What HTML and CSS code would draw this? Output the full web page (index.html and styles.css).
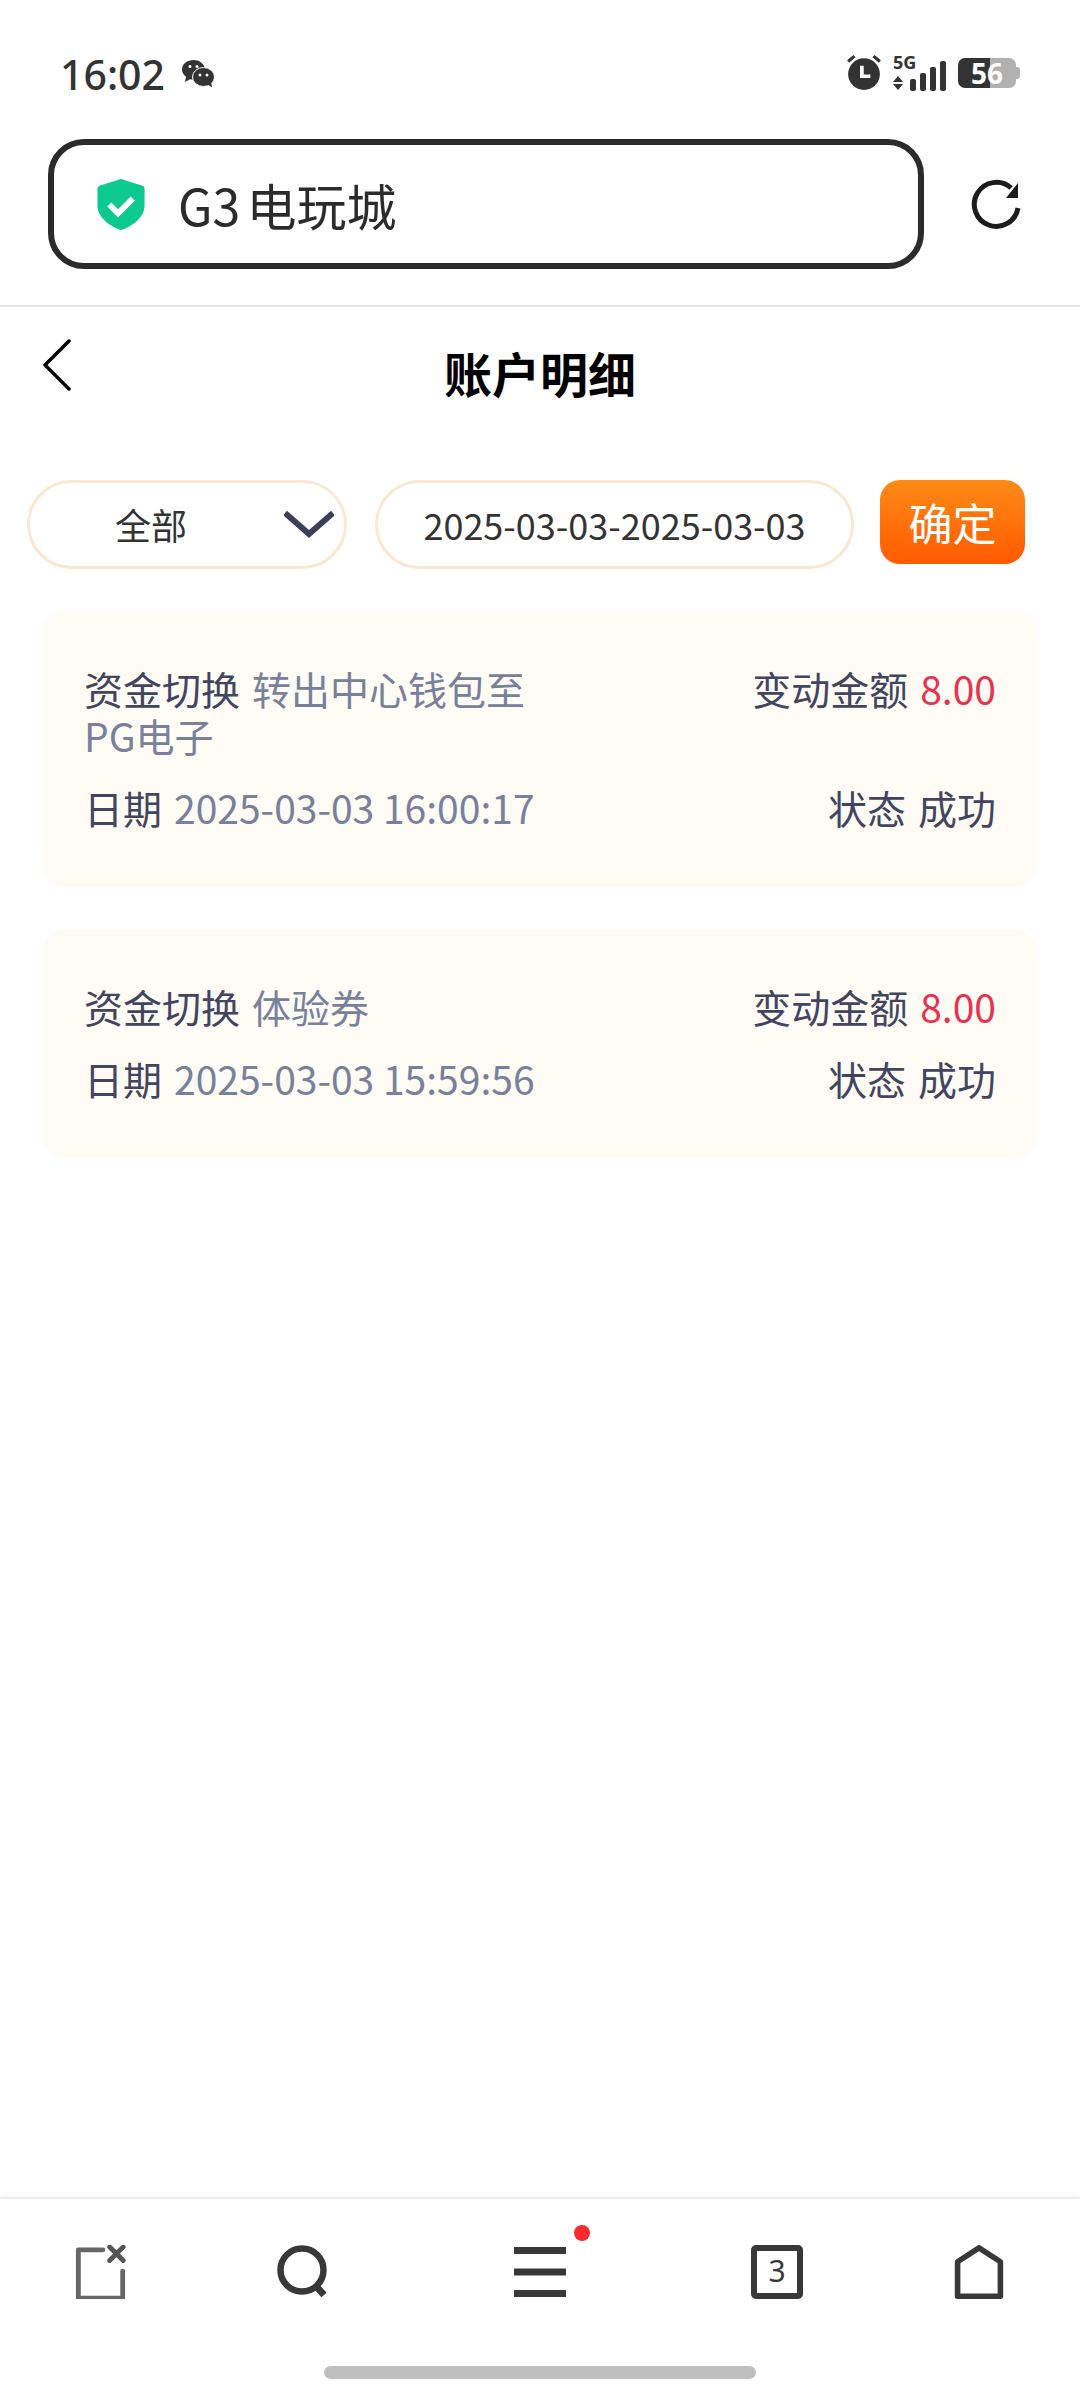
FILE: index.html
```html
<!DOCTYPE html>
<html lang="zh-CN">
<head>
    <meta charset="UTF-8">
    <meta name="viewport" content="width=device-width, initial-scale=1.0">
    <title>账户明细</title>
    <link rel="stylesheet" href="styles.css">
</head>
<body>
    <div id="screen">
        <!-- system status bar -->
        <div class="status-bar">
            <span class="clock">16:02</span>
            <svg class="wechat" viewBox="0 0 34 30">
                <path fill="#333" d="M13 1C6 1 1 5 1 10.500c0 3 1.500 5.500 4 7.300L4 23l5-2.700c1 .3 2 .4 3 .4C11 14 16 9.300 24 9 22.500 4.500 18 1 13 1z"/>
                <ellipse cx="22.500" cy="18" rx="11" ry="9.500" fill="#333" stroke="#fff" stroke-width="1"/>
                <path fill="#333" d="M26 25l5 3.500-1-6z"/>
                <circle cx="9" cy="7.500" r="1.500" fill="#fff"/>
                <circle cx="16" cy="7.500" r="1.500" fill="#fff"/>
                <circle cx="19" cy="16" r="1.500" fill="#fff"/>
                <circle cx="26" cy="16" r="1.500" fill="#fff"/>
            </svg>
            <div class="status-right">
                <svg class="alarm" viewBox="0 0 32 34">
                    <circle cx="16" cy="19" r="15" fill="#333"/>
                    <path d="M1 7l6-5M31 7l-6-5" stroke="#333" stroke-width="3" fill="none"/>
                    <path d="M14 11v10h8" stroke="#fff" stroke-width="3.500" fill="none"/>
                </svg>
                <div class="network">
                    <span class="net-label">5G</span>
                    <svg class="net-arrows" viewBox="0 0 10 14">
                        <path fill="#333" d="M5 0l5 6H0zM5 14L0 8h10z"/>
                    </svg>
                </div>
                <svg class="signal" viewBox="0 0 37 30">
                    <rect x="0" y="18" width="6" height="12" rx="2" fill="#333"/>
                    <rect x="10" y="12" width="6" height="18" rx="2" fill="#333"/>
                    <rect x="20" y="6" width="6" height="24" rx="2" fill="#333"/>
                    <rect x="30" y="0" width="6" height="30" rx="2" fill="#333"/>
                </svg>
                <div class="battery"><span>56</span></div>
            </div>
        </div>

        <!-- browser address bar -->
        <div class="address-row">
            <div class="address-box">
                <svg class="shield" viewBox="0 0 48 52">
                    <path fill="#0cc990" d="M24 0l22 7c1 .4 2 1.500 2 3v17c0 13-14 22-24 25C14 49 0 40 0 27V10c0-1.500 1-2.600 2-3z"/>
                    <path d="M12 26l9 9 15-15" stroke="#fff" stroke-width="6" fill="none"/>
                </svg>
                <span class="address-text">G3 电玩城</span>
            </div>
            <svg class="reload" viewBox="0 0 52 52">
                <path d="M48 30A22 22 0 1 1 41 10" stroke="#1c1c1c" stroke-width="5" fill="none"/>
                <path fill="#1c1c1c" d="M48 5v15H36z"/>
            </svg>
        </div>

        <!-- page header -->
        <div class="page-head">
            <svg class="back" viewBox="0 0 30 52">
                <path d="M27 2L3 26l24 24" stroke="#000" stroke-width="3.500" stroke-linecap="round" stroke-linejoin="round" fill="none"/>
            </svg>
            <h1>账户明细</h1>
        </div>

        <div class="filters">
            <div class="select-box">
                <span>全部</span>
                <svg class="caret" viewBox="0 0 50 28">
                    <path d="M1 3l24 21L49 3" stroke="#3b3f5c" stroke-width="6" fill="none"/>
                </svg>
            </div>
            <div class="date-box">2025-03-03-2025-03-03</div>
            <button class="confirm">确定</button>
        </div>

        <div class="records">
            <div class="record">
                <div class="record-row">
                    <div class="record-left">资金切换<span class="value">转出中心钱包至PG电子</span></div>
                    <div class="record-right">变动金额<span class="amount">8.00</span></div>
                </div>
                <div class="record-row">
                    <div class="record-left">日期<span class="value">2025-03-03 16:00:17</span></div>
                    <div class="record-right">状态<span class="state">成功</span></div>
                </div>
            </div>
            <div class="record">
                <div class="record-row">
                    <div class="record-left">资金切换<span class="value">体验券</span></div>
                    <div class="record-right">变动金额<span class="amount">8.00</span></div>
                </div>
                <div class="record-row">
                    <div class="record-left">日期<span class="value">2025-03-03 15:59:56</span></div>
                    <div class="record-right">状态<span class="state">成功</span></div>
                </div>
            </div>
        </div>

        <!-- browser toolbar -->
        <div class="toolbar">
            <div class="tool">
                <svg class="tool-icon" viewBox="0 0 52 56">
                    <path d="M28 6H2.500v50h46V28" transform="translate(0 -1)" stroke="#666" stroke-width="5" stroke-linecap="round" stroke-linejoin="round" fill="none"/>
                    <path d="M35 2l14 14M49 2L35 16" stroke="#555" stroke-width="5" stroke-linecap="round" fill="none"/>
                </svg>
            </div>
            <div class="tool">
                <svg class="tool-icon" viewBox="0 0 52 54">
                    <circle cx="25" cy="25" r="21.500" stroke="#383838" stroke-width="6.500" fill="none"/>
                    <path d="M38 40l9 10" stroke="#383838" stroke-width="7" stroke-linejoin="round" fill="none"/>
                </svg>
            </div>
            <div class="tool tool-menu">
                <svg class="tool-icon" viewBox="0 0 52 50">
                    <path d="M0 3.500h52M0 25h52M0 46.500h52" stroke="#383838" stroke-width="7" fill="none"/>
                </svg>
                <span class="dot"></span>
            </div>
            <div class="tool">
                <div class="tab-count">3</div>
            </div>
            <div class="tool">
                <svg class="tool-icon" viewBox="0 0 52 58">
                    <path d="M26 3L49 18v37H3V18z" stroke="#383838" stroke-width="6" stroke-linejoin="round" fill="none"/>
                </svg>
            </div>
        </div>

        <div class="home-bar"><div class="home-pill"></div></div>
    </div>
</body>
</html>
```

FILE: styles.css
```css
body {
    margin: 0;
    background-color: #fff;
    font-family: "Noto Sans CJK SC", "Noto Sans", sans-serif;
}

#screen {
    width: 1080px;
    height: 2400px;
    display: flex;
    flex-direction: column;
    overflow: hidden;
}

/* status bar */
.status-bar {
    height: 139px;
    box-sizing: border-box;
    padding: 52px 64px 0 60px;
    display: flex;
    align-items: flex-start;
}

.clock {
    font-family: "Noto Sans", sans-serif;
    font-size: 41px;
    font-weight: 500;
    line-height: 44px;
    color: #333;
}

.wechat {
    width: 34px;
    height: 30px;
    margin: 7px 0 0 16px;
}

.status-right {
    margin-left: auto;
    display: flex;
    align-items: flex-start;
}

.alarm {
    width: 34px;
    height: 36px;
    margin-top: 2px;
}

.network {
    width: 17px;
    margin-left: 12px;
    display: flex;
    flex-direction: column;
}

.net-label {
    font-family: "Noto Sans", sans-serif;
    font-size: 18px;
    font-weight: 700;
    line-height: 20px;
    color: #333;
    white-space: nowrap;
}

.net-arrows {
    width: 10px;
    height: 14px;
    margin-top: 4px;
}

.signal {
    width: 37px;
    height: 30px;
    margin: 9px 0 0 0;
}

.battery {
    width: 58px;
    height: 30px;
    margin: 6px 0 0 11px;
    position: relative;
    border-radius: 7px;
    background: linear-gradient(to right, #333 55%, #b1b1b1 55%);
    text-align: center;
    color: #fff;
    font-family: "Noto Sans", sans-serif;
    font-size: 28px;
    font-weight: 700;
    line-height: 30px;
}

.battery::after {
    content: "";
    position: absolute;
    right: -4px;
    top: 9px;
    width: 4px;
    height: 12px;
    border-radius: 0 3px 3px 0;
    background-color: #b1b1b1;
}

/* address bar */
.address-row {
    height: 168px;
    box-sizing: border-box;
    padding: 0 58px 36px 48px;
    border-bottom: 2px solid #e4e4e4;
    display: flex;
    align-items: center;
    justify-content: space-between;
}

.address-box {
    width: 876px;
    height: 130px;
    box-sizing: border-box;
    border: 6px solid #2b2b2b;
    border-radius: 36px;
    padding-left: 43px;
    display: flex;
    align-items: center;
}

.shield {
    width: 48px;
    height: 51px;
}

.address-text {
    margin-left: 33px;
    font-size: 50px;
    color: #2b2b2b;
    word-spacing: -5px;
}

.reload {
    width: 52px;
    height: 52px;
}

/* page header */
.page-head {
    height: 173px;
    position: relative;
}

.page-head h1 {
    margin: 0;
    padding-top: 31px;
    text-align: center;
    font-size: 48px;
    font-weight: 700;
    line-height: 68px;
    color: #000;
}

.back {
    position: absolute;
    left: 42px;
    top: 32px;
    width: 30px;
    height: 52px;
}

/* filter row */
.filters {
    padding-left: 27px;
    display: flex;
    align-items: flex-start;
}

.select-box,
.date-box {
    height: 89px;
    box-sizing: border-box;
    border: 3px solid #fbe8d0;
    border-radius: 45px;
    padding-bottom: 2px;
    font-size: 36px;
    color: #333;
    display: flex;
    align-items: center;
}

.select-box {
    width: 320px;
    padding-left: 85px;
    padding-right: 10px;
    justify-content: space-between;
}

.caret {
    width: 50px;
    height: 28px;
}

.date-box {
    width: 479px;
    margin-left: 28px;
    justify-content: center;
}

.confirm {
    width: 145px;
    height: 84px;
    margin-left: 26px;
    padding: 0;
    border: none;
    border-radius: 20px;
    background: linear-gradient(to bottom, #ff8b16, #ff5a00);
    color: #fff;
    font-family: inherit;
    font-size: 44px;
}

/* account records */
.records {
    padding: 42px 42px 0 42px;
    display: flex;
    flex-direction: column;
    gap: 42px;
}

.record {
    background-color: #fffbf5;
    border-radius: 24px;
    padding: 54px 42px 56px 42px;
    display: flex;
    flex-direction: column;
    gap: 25px;
    font-size: 39px;
    line-height: 47px;
    color: #41455f;
}

.record-row {
    display: flex;
    justify-content: space-between;
}

.record-left {
    max-width: 50%;
}

.value {
    margin-left: 12px;
    color: #77819b;
}

.amount {
    margin-left: 12px;
    color: #e8324f;
}

.state {
    margin-left: 12px;
}

/* bottom toolbar */
.toolbar {
    margin-top: auto;
    height: 169px;
    box-sizing: border-box;
    border-top: 2px solid #ececec;
    box-shadow: 0 -4px 6px rgba(0, 0, 0, 0.02);
    padding-top: 46px;
    display: grid;
    grid-template-columns: 202px 202px 272px 202px 202px;
}

.tool {
    display: flex;
    justify-content: center;
    align-items: flex-start;
}

.tool-menu {
    position: relative;
}

.tool-icon {
    width: 52px;
    height: 54px;
}

.dot {
    position: absolute;
    left: 170px;
    top: -20px;
    width: 16px;
    height: 16px;
    border-radius: 50%;
    background-color: #fb2a30;
}

.tab-count {
    width: 52px;
    height: 54px;
    box-sizing: border-box;
    border: 6px solid #383838;
    border-radius: 5px;
    text-align: center;
    font-family: "Noto Sans", sans-serif;
    font-size: 30px;
    line-height: 40px;
    color: #383838;
}

.home-bar {
    height: 34px;
    display: flex;
    justify-content: center;
}

.home-pill {
    width: 432px;
    height: 13px;
    border-radius: 7px;
    background-color: #bfbfbf;
}
```
